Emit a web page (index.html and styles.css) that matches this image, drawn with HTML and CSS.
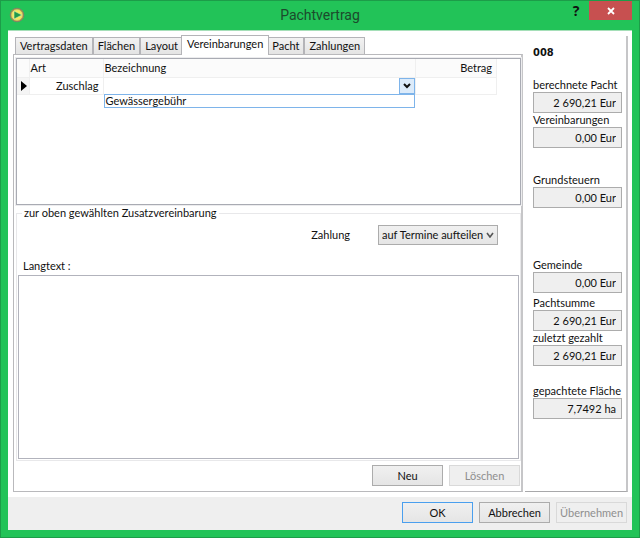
FILE: index.html
```html
<!DOCTYPE html>
<html lang="de">
<head>
<meta charset="utf-8">
<title>Pachtvertrag</title>
<link rel="stylesheet" href="styles.css">
</head>
<body>
<div class="window">
  <header class="titlebar">
    <svg class="app-icon" viewBox="0 0 16 16" aria-hidden="true">
      <circle cx="8" cy="8" r="6.8" fill="#b8a64a" stroke="#7d8468"/>
      <circle cx="8" cy="8" r="5" fill="#f5ec58" stroke="#eadf78"/>
      <path d="M5 4v8L13 8z" fill="#1f9a4c" stroke="#d8ecb0" stroke-width=".6"/>
    </svg>
    <h1>Pachtvertrag</h1>
    <div class="caption-buttons">
      <button class="help" type="button" aria-label="Hilfe">?</button>
      <button class="close" type="button" aria-label="Schließen">
        <svg viewBox="0 0 8 8"><path d="M1 1l6 6M7 1l-6 6" stroke="#fff" stroke-width="1.8"/></svg>
      </button>
    </div>
  </header>

  <main class="content">
    <section class="tab-control">
      <div class="tabs" role="tablist">
        <button type="button" role="tab">Vertragsdaten</button>
        <button type="button" role="tab">Flächen</button>
        <button type="button" role="tab">Layout</button>
        <button type="button" role="tab" class="active" aria-selected="true">Vereinbarungen</button>
        <button type="button" role="tab">Pacht</button>
        <button type="button" role="tab">Zahlungen</button>
      </div>
      <div class="pane" role="tabpanel">
        <div class="grid-box">
          <table>
            <colgroup><col class="col-mark"><col class="col-type"><col class="col-name"><col class="col-amount"></colgroup>
            <thead>
              <tr><th></th><th>Art</th><th>Bezeichnung</th><th class="right">Betrag</th></tr>
            </thead>
            <tbody>
              <tr>
                <td class="mark"><svg viewBox="0 0 6 10" aria-hidden="true"><path d="M0 0v10l6-5z"/></svg></td>
                <td class="type">Zuschlag</td>
                <td class="picker">
                  <button type="button" class="drop" aria-label="Bezeichnung wählen">
                    <svg viewBox="0 0 8 6"><path d="M1 1l3 3 3-3" fill="none" stroke="#111" stroke-width="2"/></svg>
                  </button>
                  <div class="menu" role="listbox"><div role="option">Gewässergebühr</div></div>
                </td>
                <td></td>
              </tr>
            </tbody>
          </table>
        </div>

        <fieldset>
          <legend>zur oben gewählten Zusatzvereinbarung</legend>
          <div class="payment">
            <label for="zahlung">Zahlung</label>
            <span class="select-wrap">
              <select id="zahlung"><option>auf Termine aufteilen</option></select>
              <svg viewBox="0 0 8 6" aria-hidden="true"><path d="M1 1l3 4 3-4" fill="none" stroke="#555" stroke-width="1.6"/></svg>
            </span>
          </div>
          <label class="long-label" for="langtext">Langtext :</label>
          <textarea id="langtext"></textarea>
        </fieldset>

        <div class="actions">
          <button class="btn" type="button">Neu</button>
          <button class="btn" type="button" disabled>Löschen</button>
        </div>
      </div>
    </section>

    <aside class="summary">
      <strong>008</strong>
      <div class="field"><label for="f1">berechnete Pacht</label><input id="f1" readonly value="2 690,21 Eur"></div>
      <div class="field section"><label for="f2">Vereinbarungen</label><input id="f2" readonly value="0,00 Eur"></div>
      <div class="field large-section"><label for="f3">Grundsteuern</label><input id="f3" readonly value="0,00 Eur"></div>
      <div class="field group"><label for="f4">Gemeinde</label><input id="f4" readonly value="0,00 Eur"></div>
      <div class="field"><label for="f5">Pachtsumme</label><input id="f5" readonly value="2 690,21 Eur"></div>
      <div class="field small-section"><label for="f6">zuletzt gezahlt</label><input id="f6" readonly value="2 690,21 Eur"></div>
      <div class="field"><label for="f7">gepachtete Fläche</label><input id="f7" readonly value="7,7492 ha"></div>
    </aside>
  </main>

  <footer>
    <button class="btn default" type="button">OK</button>
    <button class="btn" type="button">Abbrechen</button>
    <button class="btn" type="button" disabled>Übernehmen</button>
  </footer>
</div>
</body>
</html>
```
FILE: styles.css
```css
* { box-sizing: border-box; }

body {
  margin: 0;
  color: #111;
  font: 11px/14px Lato, sans-serif;
}

button, input, select, textarea { font: inherit; color: inherit; margin: 0; }
svg { display: block; }

.window {
  display: flex;
  flex-direction: column;
  min-height: 100vh;
  padding: 0 7px 7px;
  background: #22c358;
  border: 1px solid #1d9c49;
}

/* title bar */
.titlebar {
  display: grid;
  grid-template-columns: 80px 1fr 80px;
  height: 29px;
}
.app-icon { width: 16px; height: 16px; margin: 6px 0 0 1px; }
h1 {
  margin: 0;
  color: #1c4a2c;
  font: 14px/28px Roboto, sans-serif;
  text-align: center;
}
.caption-buttons { display: flex; justify-content: flex-end; align-items: flex-start; }
.caption-buttons button { height: 19px; border: 0; padding: 0; }
.help { width: 26px; background: none; font: bold 14px/19px "Open Sans", sans-serif; }
.close { display: grid; place-items: center; width: 43px; background: #c75050; }
.close svg { width: 8px; height: 8px; }

/* main area */
.content {
  display: flex;
  flex: 1;
  gap: 2px;
  padding: 5px 4px 5px 5px;
  background: #fff;
  border-top: 1px solid #a5dfb8;
}
.tab-control { display: flex; flex: 1; flex-direction: column; min-width: 0; }
.tabs { display: flex; align-items: flex-end; height: 18px; padding-left: 2px; }
.tabs button {
  height: 17px;
  padding: 0 4px;
  background: linear-gradient(#f2f2f2, #e4e4e4);
  border: 1px solid #b4b4b8;
  border-bottom: 0;
  white-space: nowrap;
}
.tabs .active {
  position: relative;
  height: 20px;
  margin: 0 -2px -1px;
  padding: 0 5px 3px;
  background: #fff;
}
.pane {
  display: flex;
  flex: 1;
  flex-direction: column;
  padding: 3px 0 4px 2px;
  border: 1px solid #b9b9bc;
  border-right: 2px solid #c6c6c8;
}

/* agreements table */
.grid-box {
  height: 147px;
  border: 1px solid #a9abb3;
  outline: 1px solid #ececee;
}
table { width: calc(100% - 23px); border-collapse: collapse; table-layout: fixed; }
.col-mark { width: 12px; }
.col-type { width: 74px; }
.col-amount { width: 81px; }
th, td { padding: 0 4px 0 1px; border: 1px solid #efefef; border-top: 0; border-left: 0; }
th { height: 18px; background: #fbfbfb; font-weight: normal; text-align: left; }
td { height: 17px; text-align: right; }
th.right { text-align: right; }
.mark { padding: 0 0 0 4px; background: #f5f5f5; }
.mark svg { width: 6px; height: 10px; }
.picker { position: relative; padding: 0; }
.drop {
  display: grid;
  place-items: center;
  width: 16px;
  height: 16px;
  margin-left: auto;
  padding: 0;
  background: #dcebfa;
  border: 1px solid #7eb4ea;
}
.drop svg { width: 8px; height: 6px; }
.menu {
  position: absolute;
  top: 100%;
  left: 0;
  right: 0;
  padding-left: 1px;
  background: #fff;
  border: 1px solid #7eb4ea;
  line-height: 12px;
  text-align: left;
}

/* details group */
fieldset {
  display: flex;
  flex: 1;
  flex-direction: column;
  min-width: 0;
  margin: 1px 0 0;
  padding: 5px 1px 1px;
  border: 1px solid #e8e8ea;
}
legend { margin-left: 4px; padding: 0 2px; }
.payment { display: flex; align-items: center; justify-content: flex-end; gap: 28px; padding-right: 21px; }
.select-wrap { position: relative; }
select {
  display: block;
  width: 120px;
  height: 20px;
  padding: 0 3px;
  appearance: none;
  background: linear-gradient(#f0f0f0, #e5e5e5);
  border: 1px solid #acacac;
  border-radius: 0;
}
.select-wrap svg { position: absolute; top: 7px; right: 4px; width: 8px; height: 6px; }
.long-label { margin: 14px 0 2px 5px; }
textarea {
  flex: 1;
  width: 100%;
  resize: none;
  border: 1px solid #b2b3bc;
}
.actions { display: flex; justify-content: flex-end; gap: 6px; padding: 4px 1px 1px 0; }
.btn {
  width: 71px;
  height: 21px;
  padding: 0;
  background: linear-gradient(#f0f0f0, #e5e5e5);
  border: 1px solid #acacac;
}
.btn:disabled { background: #efefef; border-color: #d9d9d9; color: #8e8e8e; }
.btn.default { border-color: #4a9fee; }

/* summary column */
.summary {
  width: 103px;
  padding: 10px 4px 0 8px;
  border-right: 2px solid #c6c6c8;
  border-bottom: 1px solid #a8a8aa;
}
.summary strong { display: block; margin-bottom: 18px; font: bold 11px/14px "DejaVu Sans Condensed", sans-serif; }
.field { white-space: nowrap; }
.field label { display: block; }
.field input {
  display: block;
  width: 100%;
  height: 21px;
  padding: 0 5px;
  background: #efefef;
  border: 1px solid #acacac;
  text-align: right;
}
.group { margin-bottom: 3px; }
.section { margin-bottom: 25px; }
.large-section { margin-bottom: 50px; }
.small-section { margin-bottom: 18px; }

footer {
  display: flex;
  justify-content: flex-end;
  gap: 6px;
  padding: 5px 5px 7px;
  background: #efefef;
}
```
